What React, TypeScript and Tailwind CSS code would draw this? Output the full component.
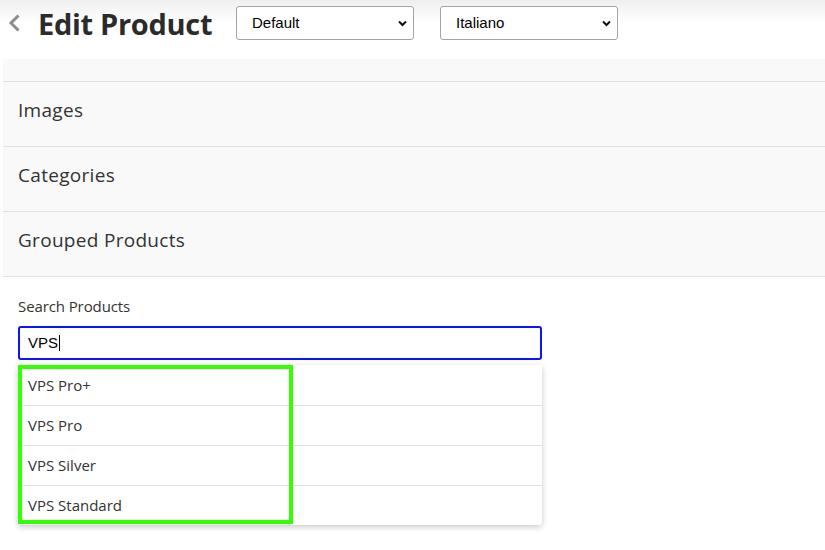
import React from 'react';

const mont = { fontFamily: '"Open Sans", "DejaVu Sans", sans-serif' };
const arial = { fontFamily: '"Liberation Sans", Arial, sans-serif' };

function FakeSelect({ value }: { value: string }) {
  return (
    <div
      className="flex h-[34px] w-[178px] items-center justify-between rounded-[3px] border border-[#a3a3a3] bg-white pl-[15px] pr-[6px] pt-px text-[15px] text-black"
      style={arial}
    >
      <span>{value}</span>
      <svg width="9" height="7" viewBox="0 0 9 7">
        <path d="M1 1.5 L4.5 5 L8 1.5" fill="none" stroke="#111" strokeWidth="2" />
      </svg>
    </div>
  );
}

export default function App() {
  const sections = ['Images', 'Categories', 'Grouped Products'];
  const results = ['VPS Pro+', 'VPS Pro', 'VPS Silver', 'VPS Standard'];

  return (
    <div className="min-h-[550px] w-[825px] bg-white text-[#333]" style={mont}>
      <div className="flex h-[46px] items-center bg-gradient-to-b from-[#efefef] via-white to-white">
        <svg className="ml-[8px]" width="13" height="18" viewBox="0 0 13 18">
          <path d="M10.5 1.5 L3 9 L10.5 16.5" fill="none" stroke="#8c8c8c" strokeWidth="3" />
        </svg>
        <h1 className="ml-[17px] w-[198px] text-[29px] font-bold leading-none tracking-[-0.3px] text-[#2b2b2b]">
          Edit Product
        </h1>
        <FakeSelect value="Default" />
        <div className="w-[26px]" />
        <FakeSelect value="Italiano" />
      </div>

      <div className="ml-[3px] mt-[13px] bg-[#f9f9f9]">
        <div className="h-[23px] border-b border-[#e2e2e2]" />
        {sections.map((s) => (
          <div key={s} className="h-[65px] border-b border-[#e2e2e2] pl-[15px] pt-[16px]">
            <div className="text-[19px] leading-[24px] tracking-[0.3px] text-[#333]">{s}</div>
          </div>
        ))}
      </div>

      <div className="px-[18px] pt-[19px]">
        <div className="text-[15px] leading-[20px] tracking-[-0.1px] text-[#333]">Search Products</div>
        <div className="mt-[10px] flex h-[34px] w-[524px] items-center rounded-[3px] border-2 border-[#0a14ff] pl-[8px] text-[15px] text-black" style={arial}>
          <span>VPS</span>
          <span className="ml-[1px] h-[16px] w-px bg-black" />
        </div>
        <div className="relative mt-[5px] w-[524px] rounded-[3px] bg-white shadow-[0_2px_6px_rgba(0,0,0,0.22)]">
          {results.map((r, i) => (
            <div
              key={r}
              className={`flex h-[40px] items-center pl-[10px] text-[15px] text-[#333] ${i > 0 ? 'border-t border-[#e0e0e0]' : ''}`}
            >
              {r}
            </div>
          ))}
          <div className="absolute left-0 top-0 h-[159px] w-[275px] border-4 border-[#33ff00]" />
        </div>
      </div>
    </div>
  );
}
